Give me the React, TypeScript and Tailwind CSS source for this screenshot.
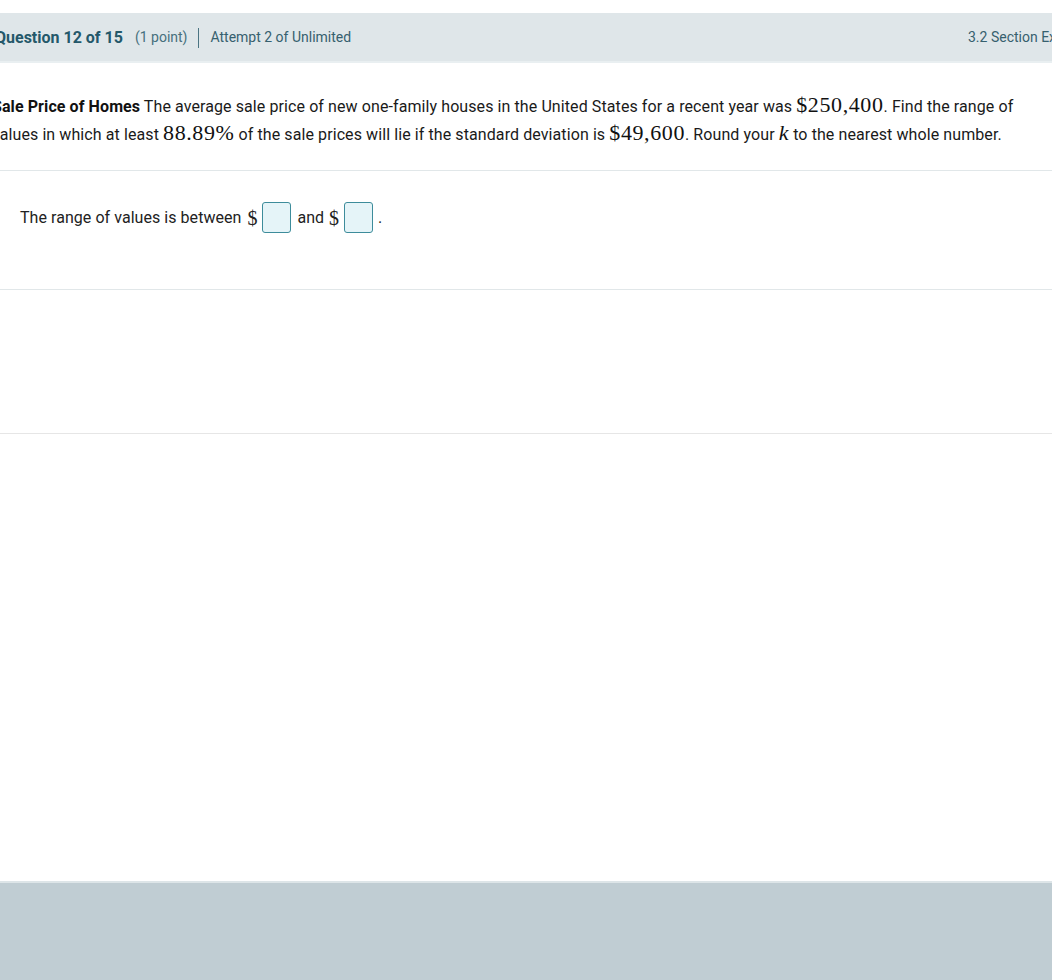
import React from "react";

function M({ children, italic }: { children: React.ReactNode; italic?: boolean }) {
  return (
    <span
      className={`font-['Liberation_Serif',serif] text-[22px] leading-none tracking-[0.6px] text-[#111] ${italic ? "italic" : ""}`}
    >
      {children}
    </span>
  );
}

function AnswerBox() {
  return (
    <span className="mx-[5px] inline-block h-[31px] w-[29px] rounded-[3px] border border-[#3d8c9b] bg-[#e5f4f8] align-middle" />
  );
}

export default function App() {
  return (
    <div className="flex h-[980px] w-[1052px] flex-col overflow-hidden bg-white font-['Roboto',sans-serif] text-[#222]">
      <div className="h-[13px] shrink-0" />

      {/* Header bar */}
      <div className="flex h-[50px] shrink-0 items-center border-b-2 border-[#e9eff1] bg-[#dfe6e9] text-[#2d5f6e]">
        <div className="-ml-[5px] flex items-center whitespace-nowrap pt-[1px]">
          <span className="text-[16px] font-bold text-[#24586a]">Question 12 of 15</span>
          <span className="ml-[12px] text-[14px] text-[#46707d]">(1 point)</span>
          <span className="mx-[11px] h-[20px] w-px bg-[#4b7482]" />
          <span className="text-[14px] text-[#36606e]">Attempt 2 of Unlimited</span>
        </div>
        <div className="flex-1" />
        <div className="w-[84px] overflow-hidden whitespace-nowrap pt-[1px] text-[14px] text-[#36606e]">
          3.2 Section Exercises
        </div>
      </div>

      {/* Question text */}
      <div className="shrink-0 border-b border-[#e1e7e9] pb-[21px] pt-[30px]">
        <p className="-ml-[8px] w-[1030px] text-[16px] leading-[28px] tracking-[0.09px] text-[#1a1a1a]">
          <b className="font-bold text-[#111]">Sale Price of Homes</b> The average sale price of new
          one-family houses in the United States for a recent year was <M>$250,400</M>. Find the
          range of values in which at least <M>88.89%</M> of the sale prices will lie if the
          standard deviation is <M>$49,600</M>. Round your <M italic>k</M> to the nearest whole
          number.
        </p>
      </div>

      {/* Answer */}
      <div className="h-[119px] shrink-0 border-b border-[#e1e7e9] pl-[20px] pt-[31px]">
        <div className="flex items-center text-[16px] text-[#222]">
          <span className="tracking-[0.05px]">The range of values is between</span>
          <span className="ml-[6px] font-['Liberation_Serif',serif] text-[20px]">$</span>
          <AnswerBox />
          <span className="ml-[1px]">and</span>
          <span className="ml-[5px] font-['Liberation_Serif',serif] text-[20px]">$</span>
          <AnswerBox />
          <span>.</span>
        </div>
      </div>

      <div className="h-[144px] shrink-0 border-b border-[#e6e6e6]" />

      <div className="flex-1" />

      {/* Footer */}
      <div className="h-[99px] shrink-0 border-t-2 border-[#dde5e8] bg-[#c0cdd3]" />
    </div>
  );
}
